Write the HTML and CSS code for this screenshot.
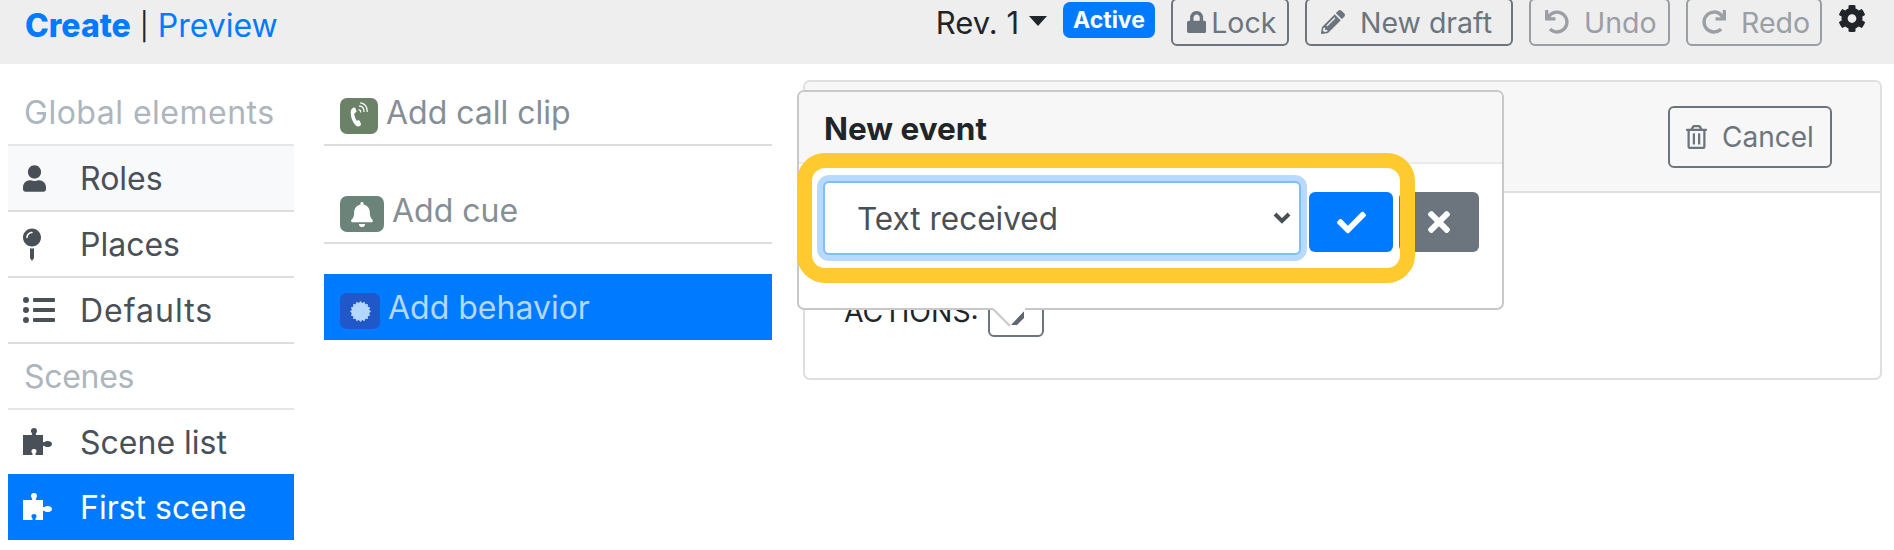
FILE: index.html
```html
<!DOCTYPE html>
<html lang="en">
<head>
    <meta charset="UTF-8">
    <title>Create</title>
    <link rel="stylesheet" href="styles.css">
</head>
<body>

<svg class="defs" aria-hidden="true">
    <symbol id="i-puzzle" viewBox="0 0 30 28"><path d="M0 7h8c1.500 0 1.600-1 .6-2.200C7.500 3.500 7.600 0 11 0s3.500 3.500 2.400 4.800C12.400 6 12.500 7 14 7h6v6c0 1.500 1 1.600 2.200.6 1.300-1.100 6.800-1.100 6.800 2.400s-5.500 3.500-6.800 2.400C21 17.400 20 17.500 20 19v8h-6.500c-1.500 0-1.600-.9-.6-2 1.100-1.300 1-4-1.900-4s-3 2.700-1.900 4c1 1.100.9 2-.6 2H0z"/></symbol>
    <symbol id="i-phone" viewBox="0 0 24 34"><path d="M5 7c1-.6 2-.6 2.500.4l1.300 3.300c.3.800 0 1.500-.7 1.900l-1.300.8c-.5.300-.6.800-.5 1.400.3 2.600 1.100 5 2.300 7.200.3.500.7.800 1.300.6l1.500-.3c.8-.1 1.500.2 1.800 1l1.100 3.300c.3 1-.2 1.800-1 2.300-1.500 1-3.500 1.100-4.800-.1C4.500 25.500 1.800 18.500 2 12.500 2 10 3 8 5 7z"/><path fill="none" stroke="currentColor" stroke-width="1.500" stroke-linecap="round" d="M12 9.500c1.500 0 2 1 2 2.500M12.500 5c3.500 0 5.500 2.500 5.500 6.500M14 1c5 1 8 5 8 10.500"/></symbol>
</svg>

<header class="topbar">
    <div class="modes">
        <a class="mode-on" href="#">Create</a><span class="sep">|</span><a href="#">Preview</a>
    </div>
    <div class="tools">
        <span class="rev">Rev. 1<i class="caret"></i></span>
        <span class="badge">Active</span>
        <button class="btn btn-lock"><svg class="ico ico-lock" viewBox="0 0 448 512"><path d="M400 224h-24v-72C376 68.200 307.800 0 224 0S72 68.200 72 152v72H48c-26.500 0-48 21.500-48 48v192c0 26.500 21.500 48 48 48h352c26.500 0 48-21.500 48-48V272c0-26.500-21.500-48-48-48zm-104 0H152v-72c0-39.700 32.300-72 72-72s72 32.300 72 72v72z"/></svg>Lock</button>
        <button class="btn btn-draft"><svg class="ico ico-gap" viewBox="0 0 512 512"><path d="M497.900 142.100l-46.100 46.100c-4.700 4.700-12.300 4.700-17 0l-111-111c-4.700-4.700-4.700-12.300 0-17l46.100-46.100c18.700-18.700 49.100-18.700 67.900 0l60.100 60.100c18.800 18.700 18.800 49.100 0 67.900zM284.200 99.800L21.600 362.400.4 483.900c-2.900 16.400 11.400 30.600 27.800 27.800l121.500-21.300 262.600-262.600c4.700-4.700 4.700-12.300 0-17l-111-111c-4.800-4.700-12.400-4.700-17.100 0zM124.100 339.900c-5.500-5.500-5.500-14.300 0-19.800l154-154c5.500-5.500 14.300-5.500 19.800 0s5.500 14.300 0 19.800l-154 154c-5.500 5.500-14.300 5.500-19.800 0zM88 424h48v36.300l-64.500 11.300-31.100-31.100L51.700 376H88v48z"/></svg>New draft</button>
        <button class="btn btn-off btn-undo"><svg class="ico ico-gap" viewBox="0 0 512 512"><path d="M212.333 224.333H12c-6.627 0-12-5.373-12-12V12C0 5.373 5.373 0 12 0h48c6.627 0 12 5.373 12 12v78.112C117.773 39.279 184.260 7.470 258.175 8.007c136.906.994 246.448 111.623 246.157 248.532C504.041 393.258 393.120 504 256.333 504c-64.089 0-122.496-24.313-166.510-64.215-5.099-4.622-5.334-12.554-.467-17.420l33.967-33.967c4.474-4.474 11.662-4.717 16.401-.525C170.760 415.336 211.580 432 256.333 432c97.268 0 176-78.716 176-176 0-97.267-78.716-176-176-176-58.496 0-110.280 28.476-142.274 72.333h98.274c6.627 0 12 5.373 12 12v48c0 6.627-5.373 12-12 12z"/></svg>Undo</button>
        <button class="btn btn-off btn-redo"><svg class="ico ico-gap" viewBox="0 0 512 512"><path d="M500.330 0h-47.410a12 12 0 0 0-12 12.570l4 82.760A247.420 247.420 0 0 0 256 8C119.340 8 7.900 119.530 8 256.190 8.100 393.070 119.100 504 256 504a247.100 247.100 0 0 0 166.180-63.910 12 12 0 0 0 .48-17.430l-34-34a12 12 0 0 0-16.380-.55A176 176 0 1 1 402.100 157.800l-101.530-4.870a12 12 0 0 0-12.570 12v47.410a12 12 0 0 0 12 12h200.330a12 12 0 0 0 12-12V12a12 12 0 0 0-12-12z"/></svg>Redo</button>
        <svg class="gear" viewBox="0 0 512 512"><path d="M487.400 315.700l-42.600-24.600c4.300-23.200 4.300-47 0-70.200l42.600-24.600c4.900-2.800 7.100-8.600 5.500-14-11.100-35.600-30-67.800-54.700-94.600-3.800-4.100-10-5.100-14.800-2.300L380.800 110c-17.900-15.400-38.500-27.300-60.800-35.100V25.800c0-5.600-3.900-10.500-9.400-11.700-36.700-8.200-74.300-7.800-109.200 0-5.500 1.200-9.400 6.100-9.400 11.700V75c-22.200 7.900-42.800 19.800-60.800 35.100L88.700 85.500c-4.900-2.800-11-1.900-14.800 2.300-24.700 26.700-43.600 58.900-54.700 94.600-1.700 5.400.6 11.200 5.500 14L67.300 221c-4.300 23.200-4.300 47 0 70.200l-42.600 24.600c-4.900 2.800-7.100 8.600-5.500 14 11.100 35.600 30 67.800 54.700 94.600 3.800 4.100 10 5.100 14.800 2.300l42.600-24.600c17.900 15.400 38.500 27.300 60.800 35.100v49.200c0 5.600 3.900 10.500 9.400 11.700 36.700 8.200 74.300 7.800 109.200 0 5.500-1.200 9.400-6.100 9.400-11.700v-49.200c22.200-7.900 42.800-19.800 60.800-35.100l42.600 24.600c4.900 2.800 11 1.900 14.800-2.300 24.700-26.700 43.600-58.900 54.700-94.600 1.500-5.500-.7-11.300-5.600-14.100zM256 336c-44.100 0-80-35.900-80-80s35.900-80 80-80 80 35.900 80 80-35.900 80-80 80z"/></svg>
    </div>
</header>

<div class="workspace">
    <nav class="sidebar">
        <div class="nav-head nav-global">Global elements</div>
        <a class="nav-item nav-hover" href="#"><span class="nav-ico"><svg width="23" height="27" viewBox="0 0 448 512"><path d="M224 256c70.700 0 128-57.300 128-128S294.700 0 224 0 96 57.300 96 128s57.300 128 128 128zm89.600 32h-16.700c-22.200 10.200-46.900 16-72.900 16s-50.600-5.800-72.900-16h-16.700C60.200 288 0 348.200 0 422.400V464c0 26.500 21.500 48 48 48h352c26.500 0 48-21.500 48-48v-41.600c0-74.200-60.200-134.400-134.400-134.400z"/></svg></span>Roles</a>
        <a class="nav-item" href="#"><span class="nav-ico"><svg width="18" height="33" viewBox="0 0 288 512"><path d="M112 316.940v156.690l22.020 33.020c4.750 7.120 15.220 7.120 19.970 0L176 473.630V316.940c-10.390 1.920-21.060 3.060-32 3.060s-21.610-1.140-32-3.060zM144 0C64.470 0 0 64.470 0 144s64.470 144 144 144 144-64.470 144-144S223.530 0 144 0zm0 76c-37.500 0-68 30.500-68 68 0 6.620-5.380 12-12 12s-12-5.380-12-12c0-50.730 41.280-92 92-92 6.620 0 12 5.380 12 12s-5.380 12-12 12z"/></svg></span>Places</a>
        <a class="nav-item nav-spaced" href="#"><span class="nav-ico"><svg width="32" height="32" viewBox="0 0 512 512"><path d="M48 48a48 48 0 1 0 48 48 48 48 0 0 0-48-48zm0 160a48 48 0 1 0 48 48 48 48 0 0 0-48-48zm0 160a48 48 0 1 0 48 48 48 48 0 0 0-48-48zm448 16H176a16 16 0 0 0-16 16v32a16 16 0 0 0 16 16h320a16 16 0 0 0 16-16v-32a16 16 0 0 0-16-16zm0-320H176a16 16 0 0 0-16 16v32a16 16 0 0 0 16 16h320a16 16 0 0 0 16-16V80a16 16 0 0 0-16-16zm0 160H176a16 16 0 0 0-16 16v32a16 16 0 0 0 16 16h320a16 16 0 0 0 16-16v-32a16 16 0 0 0-16-16z"/></svg></span>Defaults</a>
        <div class="nav-head">Scenes</div>
        <a class="nav-item nav-last" href="#"><span class="nav-ico"><svg width="30" height="28"><use href="#i-puzzle"/></svg></span>Scene list</a>
        <a class="nav-item nav-active" href="#"><span class="nav-ico"><svg width="30" height="28"><use href="#i-puzzle"/></svg></span>First scene</a>
    </nav>

    <section class="palette">
        <a class="pal-item" href="#"><span class="pal-ico ico-clip"><svg width="20" height="28"><use href="#i-phone"/></svg></span>Add call clip</a>
        <a class="pal-item pal-cue" href="#"><span class="pal-ico ico-cue"><svg width="22" height="25" viewBox="0 0 448 512"><path d="M224 512c35.320 0 63.970-28.650 63.970-64H160.030c0 35.350 28.650 64 63.970 64zm215.390-149.710c-19.320-20.760-55.470-51.990-55.470-154.290 0-77.700-54.480-139.900-127.940-155.160V32c0-17.670-14.320-32-31.980-32s-31.980 14.330-31.980 32v20.840C118.560 68.100 64.080 130.300 64.080 208c0 102.300-36.150 133.530-55.470 154.290-6 6.450-8.660 14.160-8.610 21.710.11 16.400 12.980 32 32.100 32h383.800c19.120 0 32-15.600 32.100-32 .05-7.550-2.610-15.270-8.610-21.710z"/></svg></span>Add cue</a>
        <a class="pal-item pal-active" href="#"><span class="pal-ico ico-behavior"><svg width="21" height="21" viewBox="0 0 24 24"><polygon points="24,12 21.81,13.95 23.09,16.59 20.31,17.56 20.49,20.49 17.56,20.31 16.59,23.09 13.95,21.81 12,24 10.05,21.81 7.41,23.09 6.44,20.31 3.51,20.49 3.69,17.56 .91,16.59 2.19,13.95 0,12 2.19,10.05 .91,7.41 3.69,6.44 3.51,3.51 6.44,3.69 7.41,.91 10.05,2.19 12,0 13.95,2.19 16.59,.91 17.56,3.69 20.49,3.51 20.31,6.44 23.09,7.41 21.81,10.05"/></svg></span>Add behavior</a>
    </section>

    <section class="card">
        <div class="card-head">
            <button class="btn btn-cancel"><svg class="ico ico-trash" viewBox="0 0 448 512"><path d="M268 416h24a12 12 0 0 0 12-12V188a12 12 0 0 0-12-12h-24a12 12 0 0 0-12 12v216a12 12 0 0 0 12 12zM432 80h-82.410l-34-56.700A48 48 0 0 0 274.410 0H173.590a48 48 0 0 0-41.160 23.300L98.410 80H16A16 16 0 0 0 0 96v16a16 16 0 0 0 16 16h16v336a48 48 0 0 0 48 48h288a48 48 0 0 0 48-48V128h16a16 16 0 0 0 16-16V96a16 16 0 0 0-16-16zM171.840 50.910A6 6 0 0 1 177 48h94a6 6 0 0 1 5.150 2.910L293.610 80H154.390zM368 464H80V128h288zm-212-48h24a12 12 0 0 0 12-12V188a12 12 0 0 0-12-12h-24a12 12 0 0 0-12 12v216a12 12 0 0 0 12 12z"/></svg>Cancel</button>
        </div>
        <div class="card-body">
            <span class="actions-label">Actions:</span>
            <button class="btn-actions"></button>
        </div>
    </section>
</div>

<!-- popover sits over the card -->
<div class="popover">
    <div class="popover-head">New event</div>
    <div class="popover-body">
        <select class="event-select">
            <option>Text received</option>
        </select>
        <button class="btn-ok"><svg width="29" height="29" viewBox="0 0 512 512"><path d="M173.898 439.404l-166.400-166.400c-9.997-9.997-9.997-26.206 0-36.204l36.203-36.204c9.997-9.998 26.207-9.998 36.204 0L192 312.690 432.095 72.596c9.997-9.997 26.207-9.997 36.204 0l36.203 36.204c9.997 9.997 9.997 26.206 0 36.204l-294.400 294.401c-9.998 9.997-26.207 9.997-36.204-.001z"/></svg></button>
        <button class="btn-no"><svg width="22" height="32" viewBox="0 0 352 512"><path d="M242.720 256l100.070-100.070c12.280-12.280 12.280-32.190 0-44.480l-22.240-22.240c-12.280-12.280-32.190-12.280-44.480 0L176 189.280 75.930 89.210c-12.280-12.280-32.190-12.280-44.480 0L9.210 111.450c-12.280 12.280-12.280 32.190 0 44.480L109.280 256 9.210 356.070c-12.280 12.280-12.280 32.190 0 44.480l22.240 22.240c12.280 12.280 32.200 12.280 44.480 0L176 322.720l100.070 100.070c12.280 12.280 32.200 12.280 44.480 0l22.240-22.240c12.280-12.280 12.280-32.190 0-44.480L242.720 256z"/></svg></button>
    </div>
    <div class="highlight"></div>
    <svg class="popover-arrow" width="36" height="19" viewBox="0 0 36 19">
        <path d="M19 17L32 3v7l-7 7z" fill="#5F6770"/>
        <path d="M1 0V1L18 18 19 16 33 2V0z" fill="#FFFFFF"/>
        <path d="M1 1L18 18" fill="none" stroke="#C8C8C8" stroke-width="2"/>
    </svg>
</div>

</body>
</html>
```

FILE: styles.css
```css
* {
    box-sizing: border-box;
}
body {
    font-family: "Inter", "Liberation Sans", sans-serif;
    font-size: 32px;
    color: #212529;
    margin: 0;
    height: 550px;
    overflow: hidden;
    background-color: #FFFFFF;
}
a {
    text-decoration: none;
    color: #007BFF;
}
.defs {
    display: none;
}
.topbar {
    height: 64px;
    background-color: #EEEEEE;
    display: flex;
    justify-content: space-between;
    padding: 0 28px 0 25px;
}
.modes {
    padding-top: 6px;
}
.mode-on {
    font-weight: 800;
}
.sep {
    font-size: 27px;
    margin: 0 9px;
    vertical-align: 1px;
}
.tools {
    display: flex;
    align-items: flex-start;
}
.rev {
    font-size: 31px;
    padding-top: 4px;
    margin-right: 16px;
}
.caret {
    display: inline-block;
    border-top: 10px solid #212529;
    border-left: 9px solid transparent;
    border-right: 9px solid transparent;
    margin-left: 10px;
    vertical-align: 8px;
}
.badge {
    background-color: #007BFF;
    color: #FFFFFF;
    font-size: 23px;
    font-weight: 700;
    border-radius: 7px;
    width: 92px;
    height: 36px;
    line-height: 36px;
    text-align: center;
    margin: 2px 16px 0 0;
}
.btn {
    font-family: inherit;
    font-size: 28.5px;
    color: #6C757D;
    background: transparent;
    border: 2px solid #6C757D;
    border-radius: 6px;
    height: 48px;
    margin: -2px 16px 0 0;
    padding: 0 0 0 14px;
    display: flex;
    align-items: center;
}
.btn-lock {
    width: 118px;
}
.btn-draft {
    width: 208px;
}
.btn-undo {
    width: 141px;
}
.btn-redo {
    width: 136px;
}
.btn-off {
    opacity: .65;
}
.ico {
    height: 24px;
    width: auto;
    fill: currentColor;
    margin-right: 8px;
}
.ico-lock {
    height: 22px;
    margin-right: 5px;
}
.ico-gap {
    margin-right: 15px;
}
.gear {
    width: 28px;
    height: 29px;
    fill: #212529;
    margin-top: 4px;
}
.workspace {
    display: flex;
    align-items: flex-start;
}
.sidebar {
    width: 286px;
    margin-left: 8px;
    padding-top: 16px;
}
.nav-head {
    height: 66px;
    border-bottom: 2px solid #E6E6E6;
    color: #ADB5BD;
    padding: 0 16px;
    white-space: nowrap;
    display: flex;
    align-items: center;
    letter-spacing: -.3px;
}
.nav-global {
    letter-spacing: .5px;
}
.nav-item {
    height: 66px;
    border-bottom: 2px solid #DDDDDD;
    color: #495057;
    display: flex;
    align-items: center;
}
.nav-spaced {
    letter-spacing: 1px;
}
.nav-hover {
    background-color: #F8F9FA;
}
.nav-last {
    border-bottom: none;
    height: 64px;
}
.nav-active {
    background-color: #007BFF;
    color: #FFFFFF;
    border-bottom: none;
}
.nav-ico {
    width: 72px;
    padding-left: 15px;
    display: flex;
    fill: #495057;
}
.nav-active .nav-ico {
    fill: #FFFFFF;
}
.palette {
    width: 448px;
    margin-left: 30px;
    padding-top: 16px;
}
.pal-item {
    height: 66px;
    border-bottom: 2px solid #DDDDDD;
    color: #868E96;
    display: flex;
    align-items: center;
    padding-left: 16px;
    margin-bottom: 32px;
}
.pal-cue {
    margin-bottom: 30px;
}
.pal-active {
    background-color: #007BFF;
    color: #B3D7FF;
    border-bottom: none;
    margin-bottom: 0;
}
.pal-ico {
    height: 36px;
    border-radius: 7px;
    fill: #FFFFFF;
    color: #FFFFFF;
    margin: 8px 8px 0 0;
    display: flex;
    align-items: center;
    justify-content: center;
}
.ico-clip {
    width: 38px;
    background-color: #6C8268;
}
.ico-cue {
    width: 44px;
    background-color: #6C8379;
}
.ico-behavior {
    width: 40px;
    background-color: #2158C9;
    fill: #B3D7FF;
}
.card {
    width: 1079px;
    height: 300px;
    margin: 16px 0 0 31px;
    border: 2px solid #DFDFDF;
    border-radius: 7px;
}
.card-head {
    height: 111px;
    background-color: #F7F7F7;
    border-bottom: 2px solid #DFDFDF;
    border-radius: 5px 5px 0 0;
    display: flex;
    justify-content: flex-end;
    padding: 24px 48px 0 0;
}
.btn-cancel {
    height: 62px;
    width: 164px;
    margin: 0;
    padding: 0 16px;
    font-size: 28px;
}
.ico-trash {
    flex: none;
    height: 24px;
    margin-right: 15px;
}
.card-body {
    padding: 84px 0 0 39px;
    display: flex;
    align-items: flex-end;
}
.actions-label {
    font-size: 28.4px;
    text-transform: uppercase;
    margin: 0 9px 5px 0;
    line-height: 40px;
}
.btn-actions {
    width: 56px;
    height: 60px;
    background: transparent;
    border: 2px solid #6C757D;
    border-radius: 6px;
    padding: 0;
}
.popover {
    position: absolute;
    left: 797px;
    top: 90px;
    width: 707px;
    height: 220px;
    background-color: #FFFFFF;
    border: 2px solid #C8C8C8;
    border-radius: 7px;
}
.popover-head {
    height: 72px;
    background-color: #F7F7F7;
    border-bottom: 2px solid #EBEBEB;
    border-radius: 5px 5px 0 0;
    font-weight: 700;
    font-size: 31.5px;
    padding: 2px 0 0 25px;
    display: flex;
    align-items: center;
}
.popover-body {
    display: flex;
    align-items: flex-start;
    padding: 17px 0 0 24px;
}
.event-select {
    width: 478px;
    height: 74px;
    font-family: inherit;
    font-size: 31.5px;
    color: #495057;
    background: #FFFFFF url("data:image/svg+xml,%3Csvg xmlns='http://www.w3.org/2000/svg' width='18' height='12'%3E%3Cpath d='M2 2l7 7 7-7' fill='none' stroke='%23495057' stroke-width='4'/%3E%3C/svg%3E") no-repeat right 8px center;
    border: 2px solid #80BDFF;
    border-radius: 6px;
    box-shadow: 0 0 0 6px #B8DAFF;
    padding: 0 32px;
    appearance: none;
    outline: none;
}
.btn-ok, .btn-no {
    height: 60px;
    margin-top: 11px;
    border: none;
    border-radius: 6px;
    fill: #FFFFFF;
    display: flex;
    align-items: center;
    justify-content: center;
}
.btn-ok {
    width: 84px;
    margin-left: 8px;
    background-color: #007BFF;
}
.btn-no {
    width: 80px;
    margin-left: 6px;
    background-color: #6C757D;
}
.highlight {
    position: absolute;
    left: -2px;
    top: 61px;
    width: 618px;
    height: 130px;
    border: 15px solid #FFCA2F;
    border-radius: 28px;
}
.popover-arrow {
    position: absolute;
    left: 193px;
    top: 216px;
}
```
